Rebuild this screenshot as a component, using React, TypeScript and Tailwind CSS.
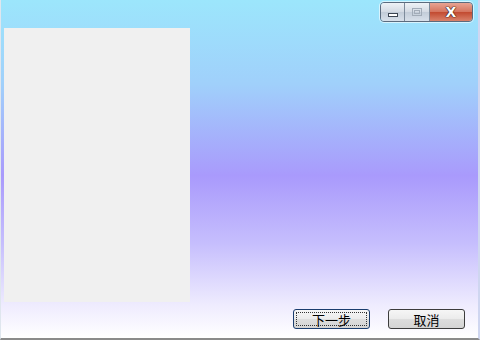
export default function App() {
  return (
    <div
      className="relative w-[480px] h-[340px] overflow-hidden border-l border-l-[#dfe6ee] border-r-2 border-r-[#cfd6f0] border-b-2 border-b-[#8a8a8a] bg-[linear-gradient(to_bottom,#9ce6fc_0%,#a0d0fb_25%,#a99afc_52%,#c6befd_72%,#eeebfe_90%,#ffffff_100%)]"
      style={{ fontFamily: '"Noto Sans CJK SC", "Liberation Sans", sans-serif' }}
    >
      {/* caption buttons */}
      <div className="absolute right-[5px] top-[2px] flex h-[20px] rounded-[4px] border border-[#5b6b7e] overflow-hidden shadow-[0_0_0_1px_rgba(255,255,255,0.6)]">
        <div className="w-[24px] flex items-center justify-center bg-[linear-gradient(to_bottom,#eef2f6,#d3dae3_50%,#c2ccd8_51%,#d8e0ea)] border-r border-[#7d8b9b]">
          <div className="mt-[6px] w-[10px] h-[4px] border border-[#3c4552] bg-white" />
        </div>
        <div className="w-[25px] flex items-center justify-center bg-[linear-gradient(to_bottom,#eef2f6,#d3dae3_50%,#c2ccd8_51%,#d8e0ea)] border-r border-[#7d8b9b]">
          <div className="w-[10px] h-[8px] border border-[#a2acb8] flex items-center justify-center">
            <div className="w-[6px] h-[4px] border border-[#a2acb8]" />
          </div>
        </div>
        <div className="w-[42px] flex items-center justify-center bg-[linear-gradient(to_bottom,#e8a493,#d4735d_50%,#c24a30_51%,#d9826b)]">
          <span
            className="text-white text-[14px] font-bold leading-none [text-shadow:0_0_1px_#2a1008,0_0_1px_#2a1008,0_0_1px_#2a1008]"
            style={{ fontFamily: '"DejaVu Sans", sans-serif' }}
          >
            X
          </span>
        </div>
      </div>

      <div className="flex flex-col h-full pt-[28px] pl-[3px]">
        <div className="w-[186px] h-[274px] bg-[#f0f0f0]" />
        <div className="flex justify-end gap-[18px] pr-[13px] mt-[7px]">
          <button className="w-[77px] h-[20px] rounded-[3px] border border-[#1a3d6e] bg-[linear-gradient(to_bottom,#f6f6f6,#ebebeb_50%,#dddddd_51%,#d4d4d4)] text-[13px] leading-none text-black flex items-center justify-center p-[2px]">
            <span className="w-full h-full flex items-center justify-center border border-dotted border-[#333]">下一步</span>
          </button>
          <button className="w-[77px] h-[20px] rounded-[3px] border border-[#3c3c3c] bg-[linear-gradient(to_bottom,#f6f6f6,#ebebeb_50%,#dddddd_51%,#d4d4d4)] text-[13px] leading-none text-black flex items-center justify-center">
            取消
          </button>
        </div>
      </div>
    </div>
  );
}
